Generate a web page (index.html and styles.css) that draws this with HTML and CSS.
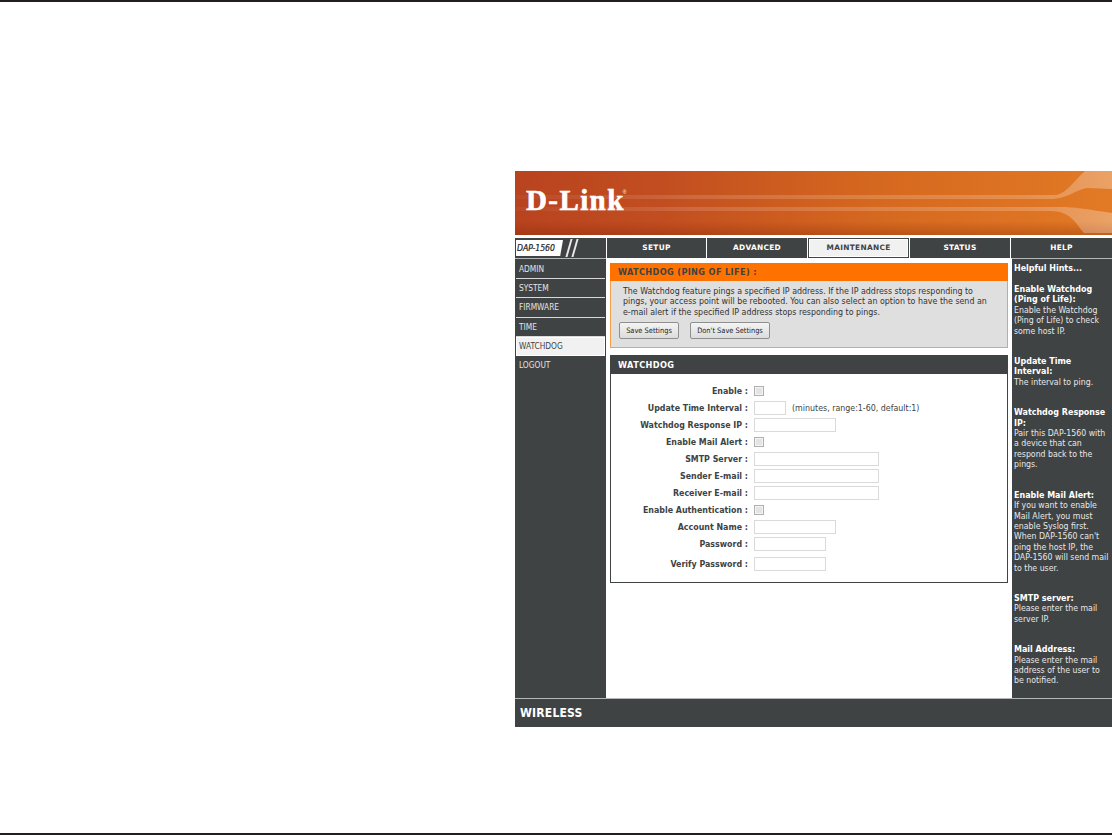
FILE: index.html
```html
<!DOCTYPE html>
<html lang="en">
<head>
<meta charset="utf-8">
<title>D-Link DAP-1560 Watchdog</title>
<link rel="stylesheet" href="styles.css">
</head>
<body>
<div class="page">
  <div class="rule"></div>
  <div class="router">
    <div class="banner">
      <svg class="streaks" viewBox="0 0 597 64" preserveAspectRatio="none" aria-hidden="true">
        <defs>
          <linearGradient id="s1" x1="0" x2="1" y1="0" y2="0">
            <stop offset="0" stop-color="#fff" stop-opacity="0.03"/>
            <stop offset="0.3" stop-color="#fff" stop-opacity="0.14"/>
            <stop offset="0.85" stop-color="#fff" stop-opacity="0.2"/>
            <stop offset="1" stop-color="#fff" stop-opacity="0.3"/>
          </linearGradient>
          <linearGradient id="bottomShade" x1="0" x2="0" y1="0" y2="1">
            <stop offset="0" stop-color="#7a1e00" stop-opacity="0"/>
            <stop offset="1" stop-color="#7a1e00" stop-opacity="0.3"/>
          </linearGradient>
        </defs>
        <rect x="0" y="50" width="597" height="14" fill="url(#bottomShade)"/>
        <path d="M0 24 H540 C550 24 560 9 570 0 H597 V18 L572 17 C560 19 553 28 535 28 H0 Z" fill="url(#s1)"/>
        <path d="M0 36 H545 C560 36 570 38 597 42 V62 H569 C560 51 555 40 535 40 H0 Z" fill="url(#s1)"/>
      </svg>
      <span class="logo">D-Link<sup class="reg">®</sup></span>
    </div>
    <div class="nav">
      <div class="model"><span class="model-name">DAP-1560</span><span class="slashes"><i></i><i></i></span></div>
      <div class="tab tab-setup">SETUP</div>
      <div class="tab tab-advanced">ADVANCED</div>
      <div class="tab tab-active">MAINTENANCE</div>
      <div class="tab">STATUS</div>
      <div class="tab tab-help">HELP</div>
    </div>
    <div class="content">
      <ul class="side">
        <li>ADMIN</li>
        <li>SYSTEM</li>
        <li>FIRMWARE</li>
        <li>TIME</li>
        <li class="side-active">WATCHDOG</li>
        <li>LOGOUT</li>
      </ul>
      <main class="main">
        <section class="notice">
          <h2 class="notice-head">WATCHDOG (PING OF LIFE) :</h2>
          <div class="notice-body">
            <p>The Watchdog feature pings a specified IP address. If the IP address stops responding to pings, your access point will be rebooted. You can also select an option to have the send an e-mail alert if the specified IP address stops responding to pings.</p>
            <div class="buttons">
              <button class="btn btn-save">Save Settings</button>
              <button class="btn btn-cancel">Don't Save Settings</button>
            </div>
          </div>
        </section>
        <section class="panel">
          <h2 class="panel-head">WATCHDOG</h2>
          <div class="form">
            <div class="row"><label>Enable :</label><span class="check"></span></div>
            <div class="row"><label>Update Time Interval :</label><span class="field w32"></span><span class="note">(minutes, range:1-60, default:1)</span></div>
            <div class="row"><label>Watchdog Response IP :</label><span class="field w82"></span></div>
            <div class="row"><label>Enable Mail Alert :</label><span class="check"></span></div>
            <div class="row"><label>SMTP Server :</label><span class="field w125"></span></div>
            <div class="row"><label>Sender E-mail :</label><span class="field w125"></span></div>
            <div class="row"><label>Receiver E-mail :</label><span class="field w125"></span></div>
            <div class="row"><label>Enable Authentication :</label><span class="check"></span></div>
            <div class="row"><label>Account Name :</label><span class="field w82"></span></div>
            <div class="row"><label>Password :</label><span class="field w72"></span></div>
            <div class="row row-last"><label>Verify Password :</label><span class="field w72"></span></div>
          </div>
        </section>
      </main>
      <aside class="help">
        <h3 class="hints">Helpful Hints...</h3>
        <div class="hint"><b>Enable Watchdog (Ping of Life):</b><br>Enable the Watchdog (Ping of Life) to check some host IP.</div>
        <div class="hint"><b>Update Time Interval:</b><br>The interval to ping.</div>
        <div class="hint"><b>Watchdog Response IP:</b><br>Pair this DAP-1560 with a device that can respond back to the pings.</div>
        <div class="hint"><b>Enable Mail Alert:</b><br>If you want to enable Mail Alert, you must enable Syslog first. When DAP-1560 can't ping the host IP, the DAP-1560 will send mail to the user.</div>
        <div class="hint"><b>SMTP server:</b><br>Please enter the mail server IP.</div>
        <div class="hint"><b>Mail Address:</b><br>Please enter the mail address of the user to be notified.</div>
      </aside>
    </div>
    <div class="foot"><span class="wireless">WIRELESS</span></div>
  </div>
  <div class="rule rule-bottom"></div>
</div>
</body>
</html>
```
FILE: styles.css
```css
* { box-sizing: border-box; }
html, body { margin: 0; padding: 0; background: #fff; }
body { font-family: "DejaVu Sans Condensed", "DejaVu Sans", sans-serif; overflow: hidden; }
.page { height: 835px; display: flex; flex-direction: column; }
.rule { height: 2px; background: #231f20; flex: none; }
.rule-bottom { margin-top: 106px; }
.router { margin: 169px 0 0 515px; width: 597px; height: 556px; display: flex; flex-direction: column; flex: none; }

.banner { height: 64px; position: relative; background: linear-gradient(90deg, #b8431f 0%, #c24e20 25%, #d5681f 60%, #e27a25 100%); flex: none; overflow: hidden; }
.streaks { position: absolute; inset: 0; width: 100%; height: 100%; }
.logo { position: absolute; left: 11px; top: 12px; font-family: "Liberation Serif", serif; font-weight: 700; font-size: 29px; line-height: 34px; color: #fff; letter-spacing: 1.4px; -webkit-text-stroke: 0.6px #fff; }
.reg { font-family: "Liberation Sans", sans-serif; font-size: 5px; font-weight: 400; vertical-align: 16px; line-height: 0; letter-spacing: 0; -webkit-text-stroke: 0; margin-left: -2px; }

.nav { margin-top: 3px; height: 20px; display: flex; gap: 1px; flex: none; }
.model { width: 91px; background: #404343; display: flex; align-items: center; padding-left: 1px; }
.model-name { background: #fff; color: #222; font: italic 400 8.6px/16px "DejaVu Sans Condensed", "DejaVu Sans", sans-serif; -webkit-text-stroke: 0.2px #222; width: 47px; padding-left: 1px; white-space: nowrap; height: 16px; clip-path: polygon(0 0, 100% 0, 94% 100%, 0 100%); }
.slashes { display: flex; gap: 4px; margin-left: 5px; height: 18px; }
.slashes i { display: block; width: 2px; height: 18px; background: #e8e8e8; transform: skewX(-16deg); }
.tab { width: 100px; background: #404343; color: #fff; font-family: "DejaVu Sans", sans-serif; font-size: 7.4px; font-weight: 700; letter-spacing: 0.3px; text-align: center; line-height: 20px; }
.tab-setup { width: 99px; }
.tab-advanced { width: 100px; }
.tab-active { width: 101px; background: #f1f1f1; color: #404343; border: 1px solid #404343; outline: 1px solid #fff; outline-offset: -2px; line-height: 18px; }
.tab-help { flex: 1; }

.content { flex: 1; display: flex; min-height: 0; background: #404343; border-bottom: 1px solid #b5b8b8; }
.side { list-style: none; margin: 0; padding: 1px 0 0; width: 91px; flex: none; border-top: 1px solid #b5b8b8; }
.side li { height: 19.2px; margin-left: 1px; margin-right: 1px; border-bottom: 1px solid #d9d9d9; color: #e4e4e4; font-size: 8.3px; line-height: 18.6px; padding-left: 3px; }
.side li:last-child { border-bottom: 0; }
.side .side-active { background: #f1f1f1; color: #404343; border: 1px solid #fff; line-height: 17px; padding-left: 2px; }

.main { flex: none; width: 405px; background: #fff; padding: 5px 3px 0 4px; border-top: 1px solid #fff; }
.notice { height: 85px; margin-top: -1px; }
.notice-head { margin: 0; background: #ff7200; color: #404343; font-family: "DejaVu Sans", sans-serif; font-size: 8.2px; font-weight: 700; line-height: 18px; height: 18px; padding-left: 8px; letter-spacing: 0.35px; }
.notice-body { background: #dfdfdf; height: 67px; border: 1px solid #f5a14c; border-top: 0; padding: 5px 12px 0 12px; color: #333; }
.notice-body p { margin: 0; max-width: 368px; font-size: 8.8px; line-height: 10.4px; }
.buttons { display: flex; gap: 11px; margin-top: 5px; margin-left: -4px; }
.btn { height: 17px; font: 400 7.4px/14px "DejaVu Sans Condensed", "DejaVu Sans", sans-serif; color: #222; background: linear-gradient(#f4f4f4, #dcdcdc); border: 1px solid #8f8f8f; border-radius: 2px; padding: 0; white-space: nowrap; }
.btn-save { width: 60px; }
.btn-cancel { width: 80px; }

.panel { margin-top: 7px; height: 228px; border: 1px solid #404343; display: flex; flex-direction: column; }
.panel-head { margin: 0; background: #404343; color: #fff; font-family: "DejaVu Sans", sans-serif; font-size: 8.2px; font-weight: 700; line-height: 18px; height: 18px; padding-left: 7px; letter-spacing: 0.4px; flex: none; }
.form { padding: 8px 0 0; }
.row { display: flex; align-items: center; height: 17px; }
.row-last { height: 23px; }
.row label { width: 137px; text-align: right; font-size: 8.8px; font-weight: 700; color: #404343; white-space: nowrap; }
.check { margin-left: 6px; width: 10px; height: 10px; border: 1px solid #b0b0b0; background: #e4e4e4; box-shadow: inset 0 0 0 1px #f4f4f4; }
.field { margin-left: 6px; height: 14px; border: 1px solid #dadada; background: #fff; }
.w32 { width: 32px; }
.w82 { width: 82px; }
.w125 { width: 125px; }
.w72 { width: 72px; }
.note { margin-left: 6px; font-size: 8.8px; color: #404343; white-space: nowrap; }

.help { flex: 1; color: #e8e8e8; font-size: 8.7px; line-height: 10.4px; padding: 4px 0 0 2px; border-top: 1px solid #b5b8b8; border-left: 1px solid #fff; }
.hints { margin: 0 0 10.6px; color: #fff; font-size: 8.9px; line-height: 10.4px; font-weight: 700; }
.hint { margin: 0 0 20px; }
.hint b { color: #fff; font-size: 8.9px; font-weight: 700; }

.foot { height: 28px; background: #404343; flex: none; display: flex; align-items: center; padding-left: 5px; }
.wireless { color: #fff; font: 700 12px/12px "DejaVu Sans Condensed", "DejaVu Sans", sans-serif; letter-spacing: 0.2px; }
```
